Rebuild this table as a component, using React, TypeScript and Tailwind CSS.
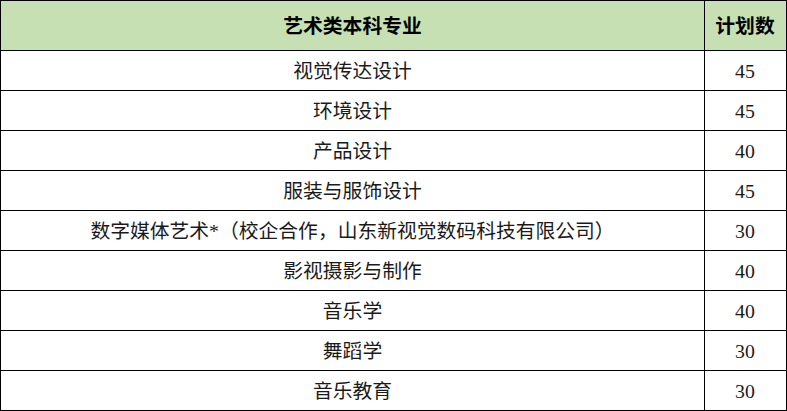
import React from "react";

const rows: [string, string][] = [
  ["视觉传达设计", "45"],
  ["环境设计", "45"],
  ["产品设计", "40"],
  ["服装与服饰设计", "45"],
  ["数字媒体艺术*（校企合作，山东新视觉数码科技有限公司）", "30"],
  ["影视摄影与制作", "40"],
  ["音乐学", "40"],
  ["舞蹈学", "30"],
  ["音乐教育", "30"],
];

export default function App() {
  return (
    <div
      className="w-[787px] h-[411px] bg-white border border-black flex flex-col text-[19.8px] text-[#1a1a1a]"
      style={{ fontFamily: '"Liberation Serif", "Noto Sans CJK SC", serif' }}
    >
      <div className="grid grid-cols-[704px_80px] h-[50px] border-b border-black bg-[#c6e0b4] font-bold text-black">
        <div className="flex items-center justify-center border-r border-black pt-[3px]">艺术类本科专业</div>
        <div className="flex items-center justify-center pt-[3px]">计划数</div>
      </div>
      {rows.map(([name, n], i) => (
        <div
          key={name}
          className={
            i < rows.length - 1
              ? "grid grid-cols-[704px_80px] h-[40px] border-b border-black"
              : "grid grid-cols-[704px_80px] h-[39px]"
          }
        >
          <div className="flex items-center justify-center border-r border-black pt-[3px]">{name}</div>
          <div className="flex items-center justify-center pt-[3px]">{n}</div>
        </div>
      ))}
    </div>
  );
}
